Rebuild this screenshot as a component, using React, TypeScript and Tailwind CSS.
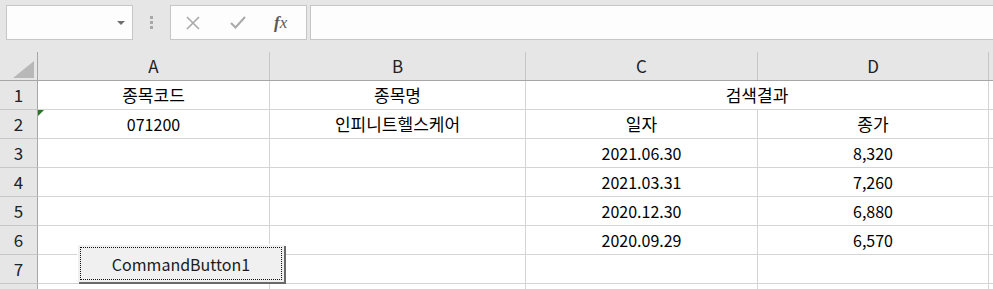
import React from "react";

const font = { fontFamily: '"Noto Sans CJK KR", "Noto Sans", sans-serif' };

const rows: [string, string, string, string][] = [
  ["종목코드", "종목명", "", ""],
  ["071200", "인피니트헬스케어", "일자", "종가"],
  ["", "", "2021.06.30", "8,320"],
  ["", "", "2021.03.31", "7,260"],
  ["", "", "2020.12.30", "6,880"],
  ["", "", "2020.09.29", "6,570"],
  ["", "", "", ""],
  ["", "", "", ""],
];

const cols = "grid-cols-[38px_232px_256px_232px_231px_1fr]";

const isKo = (s: string) => /[\uac00-\ud7a3]/.test(s);

function Cell({ text, extra = "" }: { text: string; extra?: string }) {
  return (
    <div
      className={`border-r border-b border-[#d4d4d4] flex items-center justify-center text-black ${
        isKo(text) ? "text-[17px]" : "text-[16px]"
      } ${extra}`}
    >
      {text}
    </div>
  );
}

export default function App() {
  return (
    <div className="w-[993px] h-[289px] overflow-hidden bg-white relative text-[#1b1b1b]" style={font}>
      {/* formula bar */}
      <div className="h-[52px] bg-[#e6e6e6] flex items-start pt-[5px] pl-[6px]">
        <div className="w-[127px] h-[35px] bg-[#fdfdfd] border border-[#c6c6c6] relative">
          <svg className="absolute right-[7px] top-[15px]" width="8" height="4" viewBox="0 0 8 4">
            <path d="M0 0H8L4 4Z" fill="#6f6f6f" />
          </svg>
        </div>
        <div className="w-[37px] h-[35px] flex flex-col items-center justify-center gap-[2px]">
          <div className="w-[3px] h-[3px] bg-[#a8a8a8]" />
          <div className="w-[3px] h-[3px] bg-[#a8a8a8]" />
          <div className="w-[3px] h-[3px] bg-[#a8a8a8]" />
        </div>
        <div className="w-[137px] h-[35px] bg-[#fdfdfd] border border-[#c6c6c6] flex items-center">
          <svg className="ml-[15px]" width="14" height="14" viewBox="0 0 14 14">
            <path d="M1 1L13 13M13 1L1 13" stroke="#a9a9a9" strokeWidth="1.6" />
          </svg>
          <svg className="ml-[30px]" width="16" height="13" viewBox="0 0 16 13">
            <path d="M1 7L5.5 11.5L15 1" stroke="#a9a9a9" strokeWidth="2" fill="none" />
          </svg>
          <span
            className="ml-[28px] text-[17px] italic text-[#5a5a5a] leading-none"
            style={{ fontFamily: '"Liberation Serif", serif' }}
          >
            <span className="font-bold">f</span>x
          </span>
        </div>
        <div className="ml-[3px] flex-1 h-[35px] bg-[#fdfdfd] border border-[#c6c6c6] border-r-0" />
      </div>

      {/* header row */}
      <div className={`grid ${cols} h-[29px] bg-[#e6e6e6] border-b border-[#a6a6a6]`}>
        <div className="border-r border-[#a6a6a6] relative">
          <svg className="absolute left-[13px] top-[9px]" width="21" height="17" viewBox="0 0 21 17">
            <path d="M21 0V17H0Z" fill="#b8b8b8" />
          </svg>
        </div>
        {["A", "B", "C", "D", ""].map((c, i) => (
          <div
            key={i}
            className={`flex items-center justify-center text-[17px] text-[#222] ${i < 4 ? "border-r border-[#c6c6c6]" : ""}`}
          >
            {c}
          </div>
        ))}
      </div>

      {/* body rows */}
      {rows.map((r, ri) => (
        <div key={ri} className={`grid ${cols} h-[29px]`}>
          <div className="bg-[#e6e6e6] border-r border-[#a6a6a6] border-b border-b-[#c6c6c6] flex items-center justify-center text-[17px] text-[#222]">
            {ri < 7 ? ri + 1 : ""}
          </div>
          <div className="relative border-r border-b border-[#d4d4d4] flex items-center justify-center text-black text-[16px]">
            {ri === 1 && (
              <svg className="absolute left-0 top-0" width="6" height="6" viewBox="0 0 6 6">
                <path d="M0 0H6L0 6Z" fill="#1e7b1e" />
              </svg>
            )}
            <span className={isKo(r[0]) ? "text-[17px]" : ""}>{r[0]}</span>
          </div>
          <Cell text={r[1]} />
          {ri === 0 ? (
            <Cell text="검색결과" extra="col-span-2" />
          ) : (
            <>
              <Cell text={r[2]} />
              <Cell text={r[3]} />
            </>
          )}
          <div className="border-b border-[#d4d4d4]" />
        </div>
      ))}

      {/* command button overlay */}
      <div className="absolute left-[77px] top-[244px] w-[207px] h-[38px] bg-[#f0f0f0] border-t border-l border-white shadow-[2px_2px_0_#696969] p-[2px]">
        <div className="w-full h-full border border-dotted border-[#111] flex items-center justify-center text-[16px] text-[#1b1b1b]">
          CommandButton1
        </div>
      </div>
    </div>
  );
}
